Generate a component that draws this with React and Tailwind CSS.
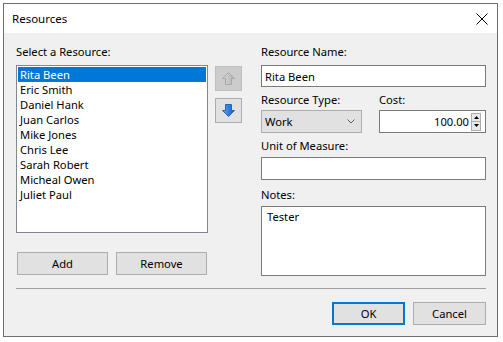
import React from "react";

const names = ["Rita Been","Eric Smith","Daniel Hank","Juan Carlos","Mike Jones","Chris Lee","Sarah Robert","Micheal Owen","Juliet Paul"];

function Arrow({ down, disabled }) {
  const pts = down
    ? "3.5,0.5 9.5,0.5 9.5,6.5 12.5,6.5 6.5,12.5 0.5,6.5 3.5,6.5"
    : "6.5,0.5 12.5,6.5 9.5,6.5 9.5,12.5 3.5,12.5 3.5,6.5 0.5,6.5";
  return (
    <svg width="13" height="13" viewBox="0 0 13 13">
      <defs>
        <linearGradient id="bl" x1="0" y1="0" x2="1" y2="0">
          <stop offset="0" stopColor="#6aa8f0" />
          <stop offset="0.5" stopColor="#2f7fe0" />
          <stop offset="1" stopColor="#1c5cc0" />
        </linearGradient>
        <linearGradient id="gr" x1="0" y1="0" x2="1" y2="0">
          <stop offset="0" stopColor="#d6d6d6" />
          <stop offset="1" stopColor="#b4b4b4" />
        </linearGradient>
      </defs>
      <polygon
        points={pts}
        fill={disabled ? "url(#gr)" : "url(#bl)"}
        stroke={disabled ? "#a9a9a9" : "#2b62b8"}
        strokeWidth="1"
        strokeLinejoin="miter"
      />
    </svg>
  );
}

export default function App() {
  return (
    <div className="w-[503px] h-[342px] bg-white pt-[3px] pl-[3px] text-[11.2px] text-black" style={{ fontFamily: '"Noto Sans", "Segoe UI", sans-serif' }}>
      <div className="w-[495px] h-[334px] border border-[#6f6f6f] flex flex-col">
        <div className="h-[29px] bg-white flex items-center justify-between pl-[8px] pr-[8px]">
          <span className="leading-[15px] text-[11.5px]">Resources</span>
          <svg width="12" height="12" viewBox="0 0 12 12" className="mr-[1px]">
            <path d="M0.5 0.5 L11.5 11.5 M11.5 0.5 L0.5 11.5" stroke="#000" strokeWidth="1" />
          </svg>
        </div>
        <div className="flex-1 bg-[#f0f0f0] pl-[12px] pr-[11px] pt-[10px] flex flex-col">
          <div className="flex">
            <div className="w-[192px] flex flex-col">
              <div className="h-[22px] pt-[1px] leading-[15px]">Select a Resource:</div>
              <div className="h-[168px] border border-[#828790] bg-white p-[1px]">
                {names.map((n, i) => (
                  <div key={n} className={"h-[15px] leading-[15px] pl-[2px] " + (i === 0 ? "bg-[#0078d7] text-white" : "")}>{n}</div>
                ))}
              </div>
              <div className="flex gap-[8px] mt-[19px] ml-[1px]">
                <button className="w-[91px] h-[23px] border border-[#adadad] bg-[#e1e1e1] leading-[15px]">Add</button>
                <button className="w-[91px] h-[23px] border border-[#adadad] bg-[#e1e1e1] leading-[15px]">Remove</button>
              </div>
            </div>
            <div className="ml-[7px] mt-[23px] flex flex-col gap-[7px]">
              <div className="w-[27px] h-[25px] border border-[#bfbfbf] bg-[#cccccc] flex items-center justify-center">
                <Arrow disabled />
              </div>
              <div className="w-[27px] h-[25px] border border-[#adadad] bg-[#e1e1e1] flex items-center justify-center">
                <Arrow down />
              </div>
            </div>
            <div className="ml-[19px] w-[225px] flex flex-col">
              <div className="h-[22px] pt-[1px] leading-[15px]">Resource Name:</div>
              <div className="h-[22px] border border-[#7a7a7a] bg-white pl-[3px] flex items-center leading-[15px]">Rita Been</div>
              <div className="flex">
                <div className="w-[101px] flex flex-col">
                  <div className="h-[23px] pt-[5px] leading-[15px]">Resource Type:</div>
                  <div className="h-[23px] border border-[#adadad] bg-[#e1e1e1] flex items-center justify-between pl-[3px] pr-[6px] leading-[15px]">
                    <span>Work</span>
                    <svg width="8" height="5" viewBox="0 0 8 5">
                      <path d="M0.5 0.5 L4 4 L7.5 0.5" stroke="#606060" strokeWidth="1" fill="none" />
                    </svg>
                  </div>
                </div>
                <div className="ml-[17px] w-[107px] flex flex-col">
                  <div className="h-[23px] pt-[5px] leading-[15px]">Cost:</div>
                  <div className="h-[23px] border border-[#7a7a7a] bg-white flex items-center justify-end pr-[4px]">
                    <span className="leading-[15px] mr-[2px]">100.00</span>
                    <div className="flex flex-col w-[10px] h-[18px]">
                      <div className="flex-1 border border-[#adadad] bg-[#e9e9e9] flex items-center justify-center">
                        <svg width="5" height="3" viewBox="0 0 5 3"><path d="M2.5 0 L5 3 L0 3 Z" fill="#000" /></svg>
                      </div>
                      <div className="flex-1 border border-t-0 border-[#adadad] bg-[#e9e9e9] flex items-center justify-center">
                        <svg width="5" height="3" viewBox="0 0 5 3"><path d="M0 0 L5 0 L2.5 3 Z" fill="#000" /></svg>
                      </div>
                    </div>
                  </div>
                </div>
              </div>
              <div className="h-[24px] pt-[5px] leading-[15px]">Unit of Measure:</div>
              <div className="h-[23px] border border-[#7a7a7a] bg-white"></div>
              <div className="h-[26px] pt-[7px] leading-[15px]">Notes:</div>
              <div className="h-[70px] border border-[#7a7a7a] bg-white pl-[5px] pt-[2px] leading-[15px]">Tester</div>
            </div>
          </div>
          <div className="mt-[12px] h-[1px] bg-[#a0a0a0]"></div>
          <div className="flex justify-end gap-[8px] mt-[13px]">
            <button className="w-[73px] h-[23px] border-2 border-[#0078d7] bg-[#e1e1e1] leading-[15px]">OK</button>
            <button className="w-[73px] h-[23px] border border-[#adadad] bg-[#e1e1e1] leading-[15px]">Cancel</button>
          </div>
        </div>
      </div>
    </div>
  );
}
